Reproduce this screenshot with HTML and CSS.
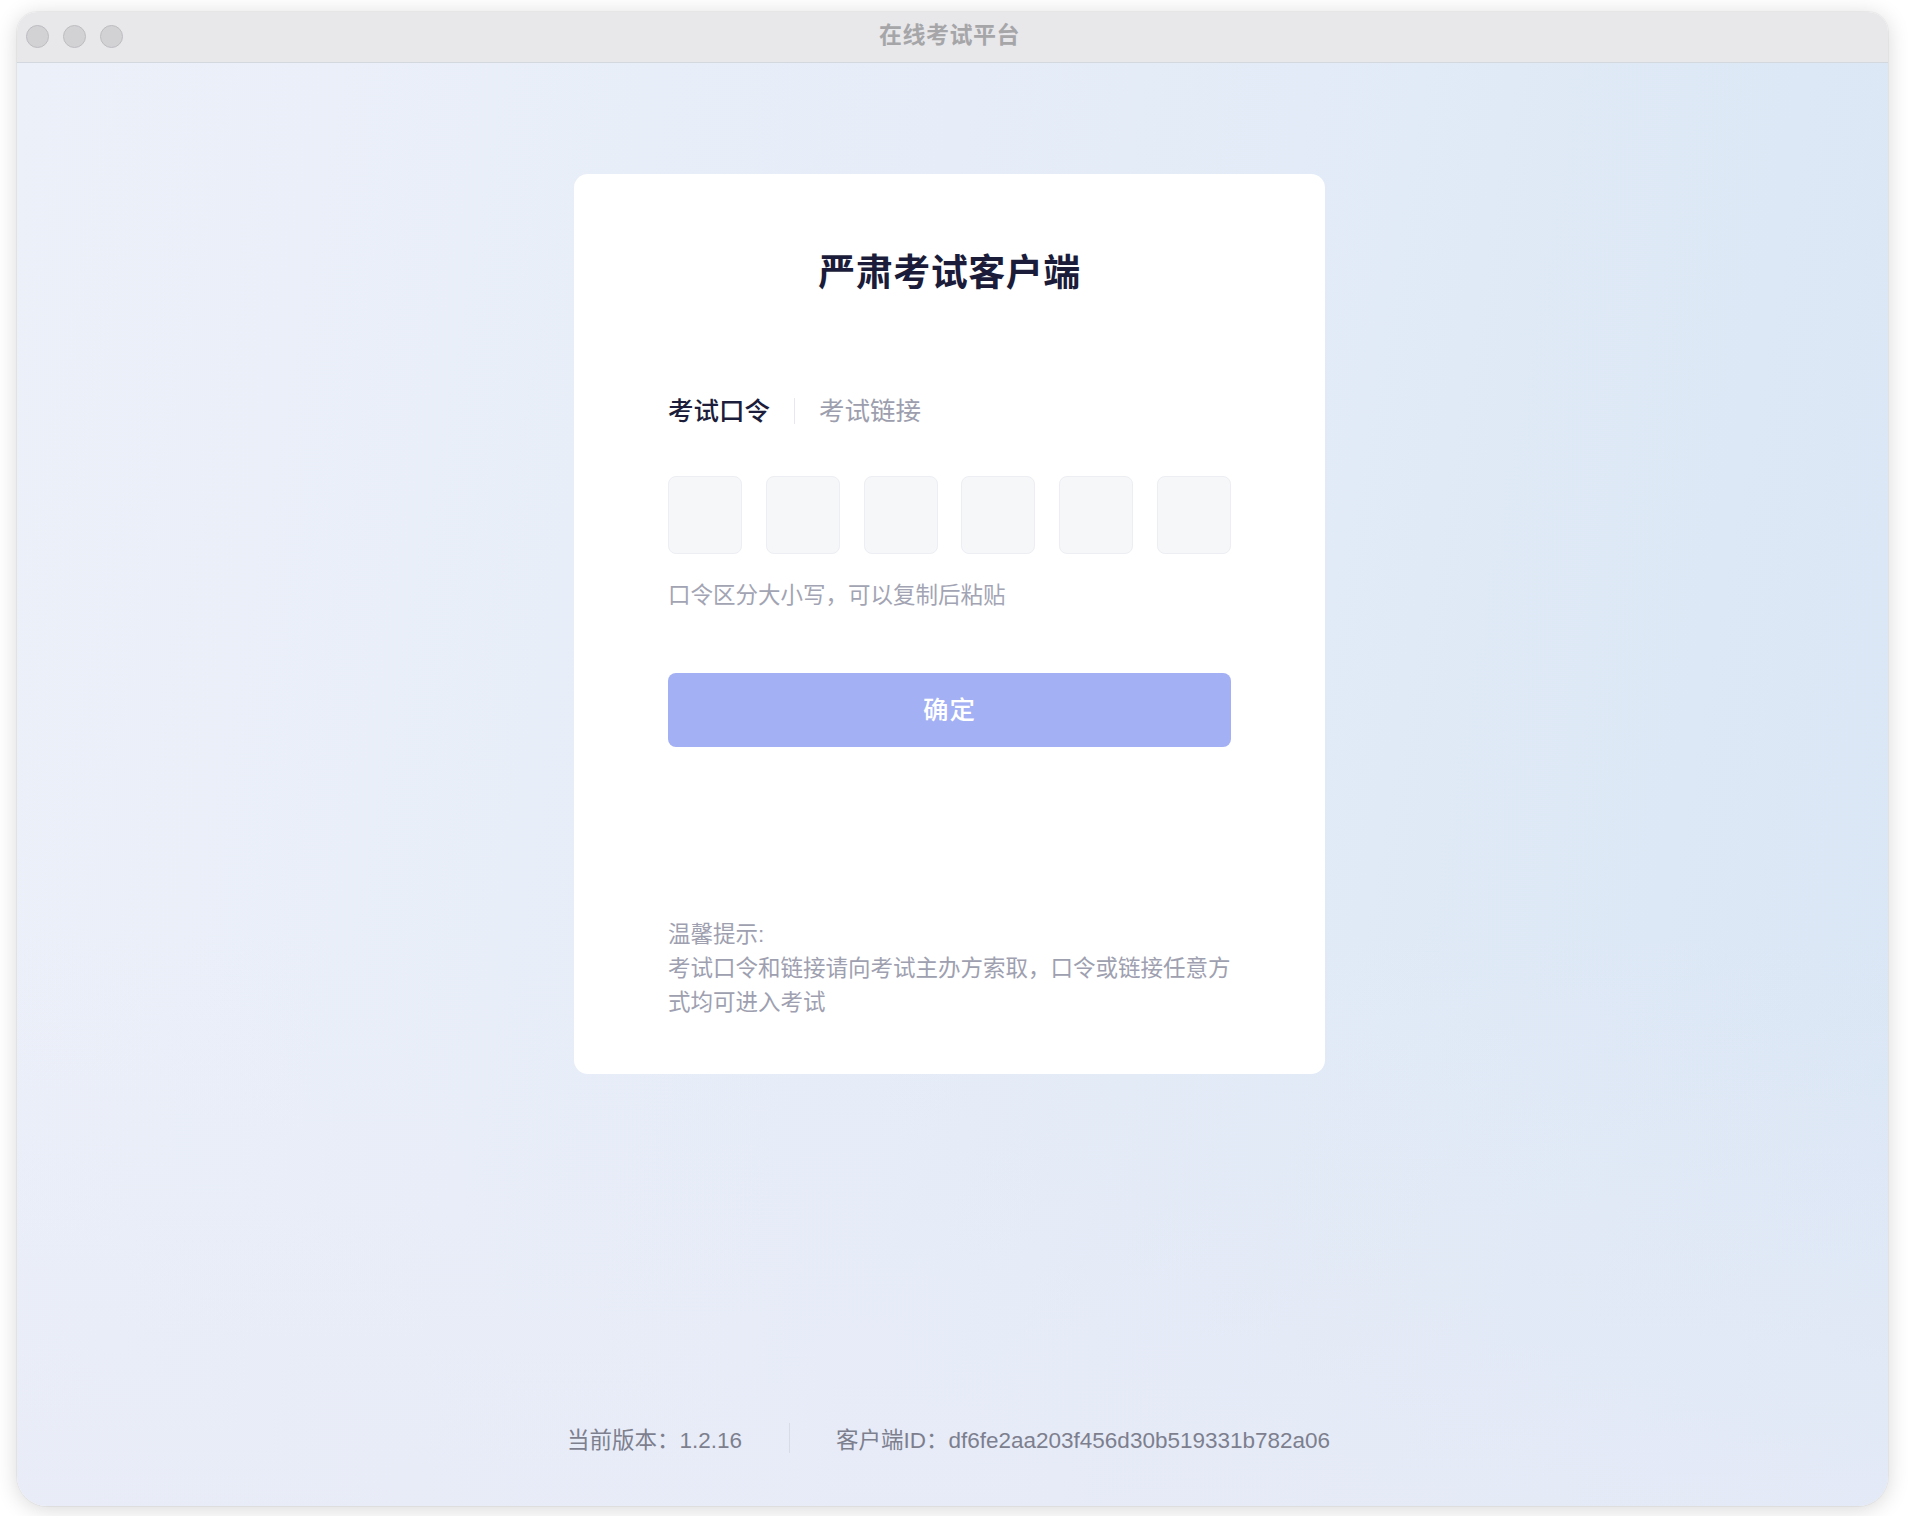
FILE: index.html
```html
<!DOCTYPE html>
<html lang="zh-CN">
<head>
<meta charset="utf-8">
<title>在线考试平台</title>
<link rel="stylesheet" href="styles.css">
</head>
<body>
<div class="window">
  <div class="titlebar">
    <div class="lights">
      <span class="light"></span>
      <span class="light"></span>
      <span class="light"></span>
    </div>
    <div class="win-title">在线考试平台</div>
  </div>
  <div class="content">
    <div class="card">
      <h1 class="card-title">严肃考试客户端</h1>
      <div class="tabs">
        <span class="tab active">考试口令</span>
        <span class="tab-sep"></span>
        <span class="tab">考试链接</span>
      </div>
      <div class="codes">
        <div class="code-box"></div>
        <div class="code-box"></div>
        <div class="code-box"></div>
        <div class="code-box"></div>
        <div class="code-box"></div>
        <div class="code-box"></div>
      </div>
      <div class="hint">口令区分大小写，可以复制后粘贴</div>
      <button class="confirm">确定</button>
      <div class="tips">
        <div>温馨提示:</div>
        <div>考试口令和链接请向考试主办方索取，口令或链接任意方式均可进入考试</div>
      </div>
    </div>
    <div class="footer">
      <span>当前版本：1.2.16</span>
      <span class="foot-sep"></span>
      <span>客户端ID：df6fe2aa203f456d30b519331b782a06</span>
    </div>
  </div>
</div>
</body>
</html>
```

FILE: styles.css
```css
html, body {
  margin: 0;
  padding: 0;
  background: #ffffff;
}
body {
  width: 1908px;
  height: 1516px;
  box-sizing: border-box;
  padding: 12px 20px 10px 17px;
  font-family: "Liberation Sans", "Noto Sans CJK SC", sans-serif;
}
.window {
  width: 1871px;
  height: 1494px;
  border-radius: 20px 20px 30px 30px;
  overflow: hidden;
  display: flex;
  flex-direction: column;
  box-shadow: 0 3px 22px rgba(0, 0, 0, 0.16), 0 0 0 1px rgba(0, 0, 0, 0.04);
}
.titlebar {
  height: 50px;
  flex: none;
  background: #e8e8eb;
  border-bottom: 1px solid #d3d7de;
  display: flex;
  align-items: center;
  position: relative;
}
.lights {
  display: flex;
  gap: 14px;
  padding-left: 9px;
  padding-bottom: 2px;
}
.light {
  width: 21px;
  height: 21px;
  border-radius: 50%;
  background: #d2d2d5;
  border: 1px solid #bdbdc1;
}
.win-title {
  position: absolute;
  left: 0;
  right: 0;
  top: 0;
  bottom: 0;
  display: flex;
  align-items: center;
  justify-content: center;
  font-size: 23px;
  font-weight: 700;
  color: #a6a6a9;
  letter-spacing: 0.5px;
  padding-right: 6px;
  padding-bottom: 9px;
}
.content {
  flex: 1;
  display: flex;
  flex-direction: column;
  align-items: center;
  background:
    linear-gradient(180deg, rgba(236, 238, 250, 0) 60%, rgba(232, 235, 247, 0.7) 100%),
    linear-gradient(100deg, #ecf0f9 0%, #e6edf8 45%, #d9e6f5 100%);
}
.card {
  margin-top: 111px;
  margin-right: 6px;
  width: 751px;
  height: 900px;
  box-sizing: border-box;
  padding: 75px 94px 54px;
  background: #ffffff;
  border-radius: 14px;
  display: flex;
  flex-direction: column;
}
.card > * {
  flex-shrink: 0;
}
.card-title {
  margin: 0;
  text-align: center;
  font-size: 37px;
  line-height: 50px;
  font-weight: 700;
  color: #1b1c3a;
  letter-spacing: 0.5px;
}
.tabs {
  margin-top: 92px;
  height: 40px;
  display: flex;
  align-items: center;
}
.tab {
  font-size: 25.5px;
  line-height: 40px;
  color: #9c9eae;
}
.tab.active {
  color: #1c1d3a;
  font-weight: 500;
}
.tab-sep {
  width: 1px;
  height: 26px;
  background: #e6e8ee;
  margin: 0 24px;
}
.codes {
  margin-top: 45px;
  display: flex;
  justify-content: space-between;
}
.code-box {
  width: 74px;
  height: 78px;
  box-sizing: border-box;
  background: #f6f7f9;
  border: 1.5px solid #eceef3;
  border-radius: 8px;
}
.hint {
  margin-top: 26px;
  font-size: 22.5px;
  line-height: 32px;
  color: #a2a4b3;
}
.confirm {
  margin-top: 61px;
  height: 74px;
  width: 100%;
  border: none;
  border-radius: 8px;
  background: #a3b0f4;
  color: #ffffff;
  font-family: inherit;
  font-size: 25.5px;
  font-weight: 500;
  letter-spacing: 1px;
  padding: 0 0 6px;
}
.tips {
  margin-top: 171px;
  font-size: 22.5px;
  line-height: 34px;
  color: #9ea0b0;
}
.footer {
  margin-top: auto;
  margin-bottom: 48px;
  margin-right: 8px;
  height: 40px;
  display: flex;
  align-items: center;
  font-size: 22.5px;
  color: #7d7f8e;
}
.foot-sep {
  width: 1px;
  height: 30px;
  background: #d8dce5;
  margin: 0 46px 0 47px;
}
```
